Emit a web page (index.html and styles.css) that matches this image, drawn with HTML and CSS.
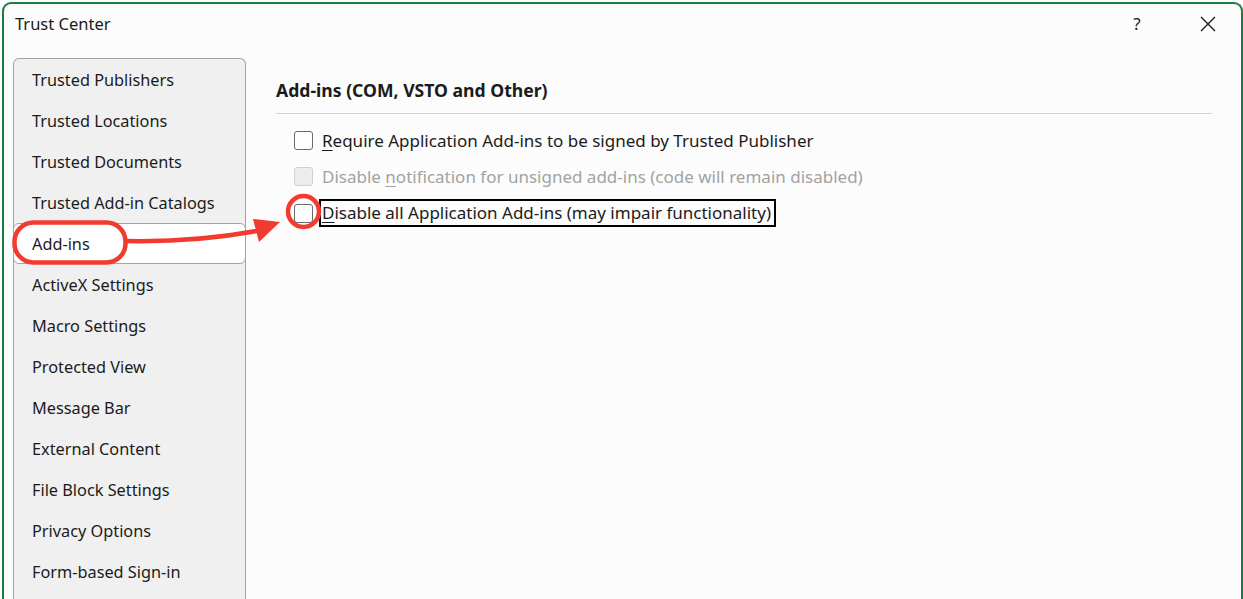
FILE: index.html
```html
<!DOCTYPE html>
<html lang="en">
<head>
<meta charset="utf-8">
<title>Trust Center</title>
<link rel="stylesheet" href="styles.css">
</head>
<body>
<div class="window">
  <div class="titlebar">
    <div class="title">Trust Center</div>
    <div class="title-buttons">
      <span class="help">?</span>
      <span class="close">
        <svg width="16" height="16" viewBox="0 0 16 16"><path d="M1 1 L15 15 M15 1 L1 15" stroke="#1a1a1a" stroke-width="1.4" fill="none"/></svg>
      </span>
    </div>
  </div>
  <div class="main">
    <nav class="nav">
      <div class="nav-item">Trusted Publishers</div>
      <div class="nav-item">Trusted Locations</div>
      <div class="nav-item">Trusted Documents</div>
      <div class="nav-item">Trusted Add-in Catalogs</div>
      <div class="nav-item selected">Add-ins</div>
      <div class="nav-item">ActiveX Settings</div>
      <div class="nav-item">Macro Settings</div>
      <div class="nav-item">Protected View</div>
      <div class="nav-item">Message Bar</div>
      <div class="nav-item">External Content</div>
      <div class="nav-item">File Block Settings</div>
      <div class="nav-item">Privacy Options</div>
      <div class="nav-item">Form-based Sign-in</div>
    </nav>
    <section class="content">
      <h2 class="heading">Add-ins (COM, VSTO and Other)</h2>
      <div class="rule"></div>
      <div class="options">
        <label class="option">
          <span class="box"></span>
          <span class="label"><u>R</u>equire Application Add-ins to be signed by Trusted Publisher</span>
        </label>
        <label class="option disabled">
          <span class="box"></span>
          <span class="label">Disable <u>n</u>otification for unsigned add-ins (code will remain disabled)</span>
        </label>
        <label class="option">
          <span class="box"></span>
          <span class="label focused"><u>D</u>isable all Application Add-ins (may impair functionality)</span>
        </label>
      </div>
    </section>
  </div>
</div>
<svg class="annotation" width="1243" height="599" viewBox="0 0 1243 599">
  <rect x="14.5" y="222.5" width="111" height="40" rx="19" ry="19" fill="none" stroke="#f23b2f" stroke-width="4.5"/>
  <circle cx="303.5" cy="211.5" r="15.5" fill="none" stroke="#f23b2f" stroke-width="4.5"/>
  <path d="M126 241 C 175 242, 215 239, 262 230" fill="none" stroke="#f23b2f" stroke-width="4.5" stroke-linecap="round"/>
  <polygon points="280,222 253,219 259,242" fill="#f23b2f"/>
</svg>
</body>
</html>
```
FILE: styles.css
```css
* { box-sizing: border-box; }
html, body { margin: 0; padding: 0; }
body {
  width: 1243px;
  height: 599px;
  overflow: hidden;
  background: #ffffff;
  font-family: "Noto Sans", "Open Sans", sans-serif;
  color: #1b1b1b;
  position: relative;
}
.window {
  margin: 2px 0 0 2px;
  width: 1241px;
  height: 597px;
  overflow: hidden;
  border: 2px solid #1a7d45;
  border-bottom: none;
  border-radius: 9px 9px 0 0;
  background: #fcfcfc;
  display: flex;
  flex-direction: column;
}
.titlebar {
  height: 54px;
  display: flex;
  justify-content: space-between;
  align-items: flex-start;
  padding: 8px 0 0 11px;
  flex-shrink: 0;
}
.title {
  font-size: 16.5px;
  color: #1b1b1b;
}
.title-buttons {
  display: flex;
  align-items: center;
  margin-top: 0;
}
.help {
  font-size: 17px;
  width: 40px;
  text-align: center;
  color: #1b1b1b;
  margin-right: 43px;
}
.close {
  width: 16px;
  height: 16px;
  margin-right: 25px;
  display: block;
}
.close svg { display: block; }
.main {
  display: flex;
  flex: 1;
  min-height: 0;
  padding-left: 9px;
}
.nav {
  width: 233px;
  border: 1px solid #a3a3a3;
  border-bottom: none;
  border-radius: 6px 6px 0 0;
  background: #f0f0f0;
  flex-shrink: 0;
  overflow: hidden;
}
.nav-item {
  height: 41px;
  line-height: 42px;
  padding-left: 18px;
  font-size: 16.3px;
  color: #1b1b1b;
  white-space: nowrap;
}
.nav-item.selected {
  background: #ffffff;
  border: 1px solid #a3a3a3;
  border-radius: 6px;
  line-height: 40px;
  padding-left: 18px;
  margin: 0 -1px;
}
.content {
  flex: 1;
  padding: 0 29px 0 30px;
}
.heading {
  margin: 20px 0 0 0;
  font-size: 17.6px;
  font-weight: 700;
  line-height: 24px;
  color: #1b1b1b;
}
.rule {
  height: 1px;
  background: #d3d3d3;
  margin-top: 11px;
}
.options {
  padding-top: 12px;
  padding-left: 18px;
  display: flex;
  flex-direction: column;
  gap: 8.5px;
}
.option {
  display: flex;
  align-items: center;
  height: 28px;
  font-size: 17px;
}
.box {
  width: 19px;
  height: 19px;
  border: 1.5px solid #6b6b6b;
  border-radius: 3px;
  background: #ffffff;
  margin-right: 9px;
  flex-shrink: 0;
}
.disabled .box {
  border-color: #d0d0d0;
  background: #ececec;
}
.disabled .label { color: #a2a2a2; }
.label u { text-decoration-thickness: 1px; text-underline-offset: 3px; }
.focused {
  border: 2px solid #000;
  padding: 0 3px 0 1px;
  margin-left: -3px;
  line-height: 24px;
}
.annotation {
  position: absolute;
  left: 0;
  top: 0;
  pointer-events: none;
}
```
